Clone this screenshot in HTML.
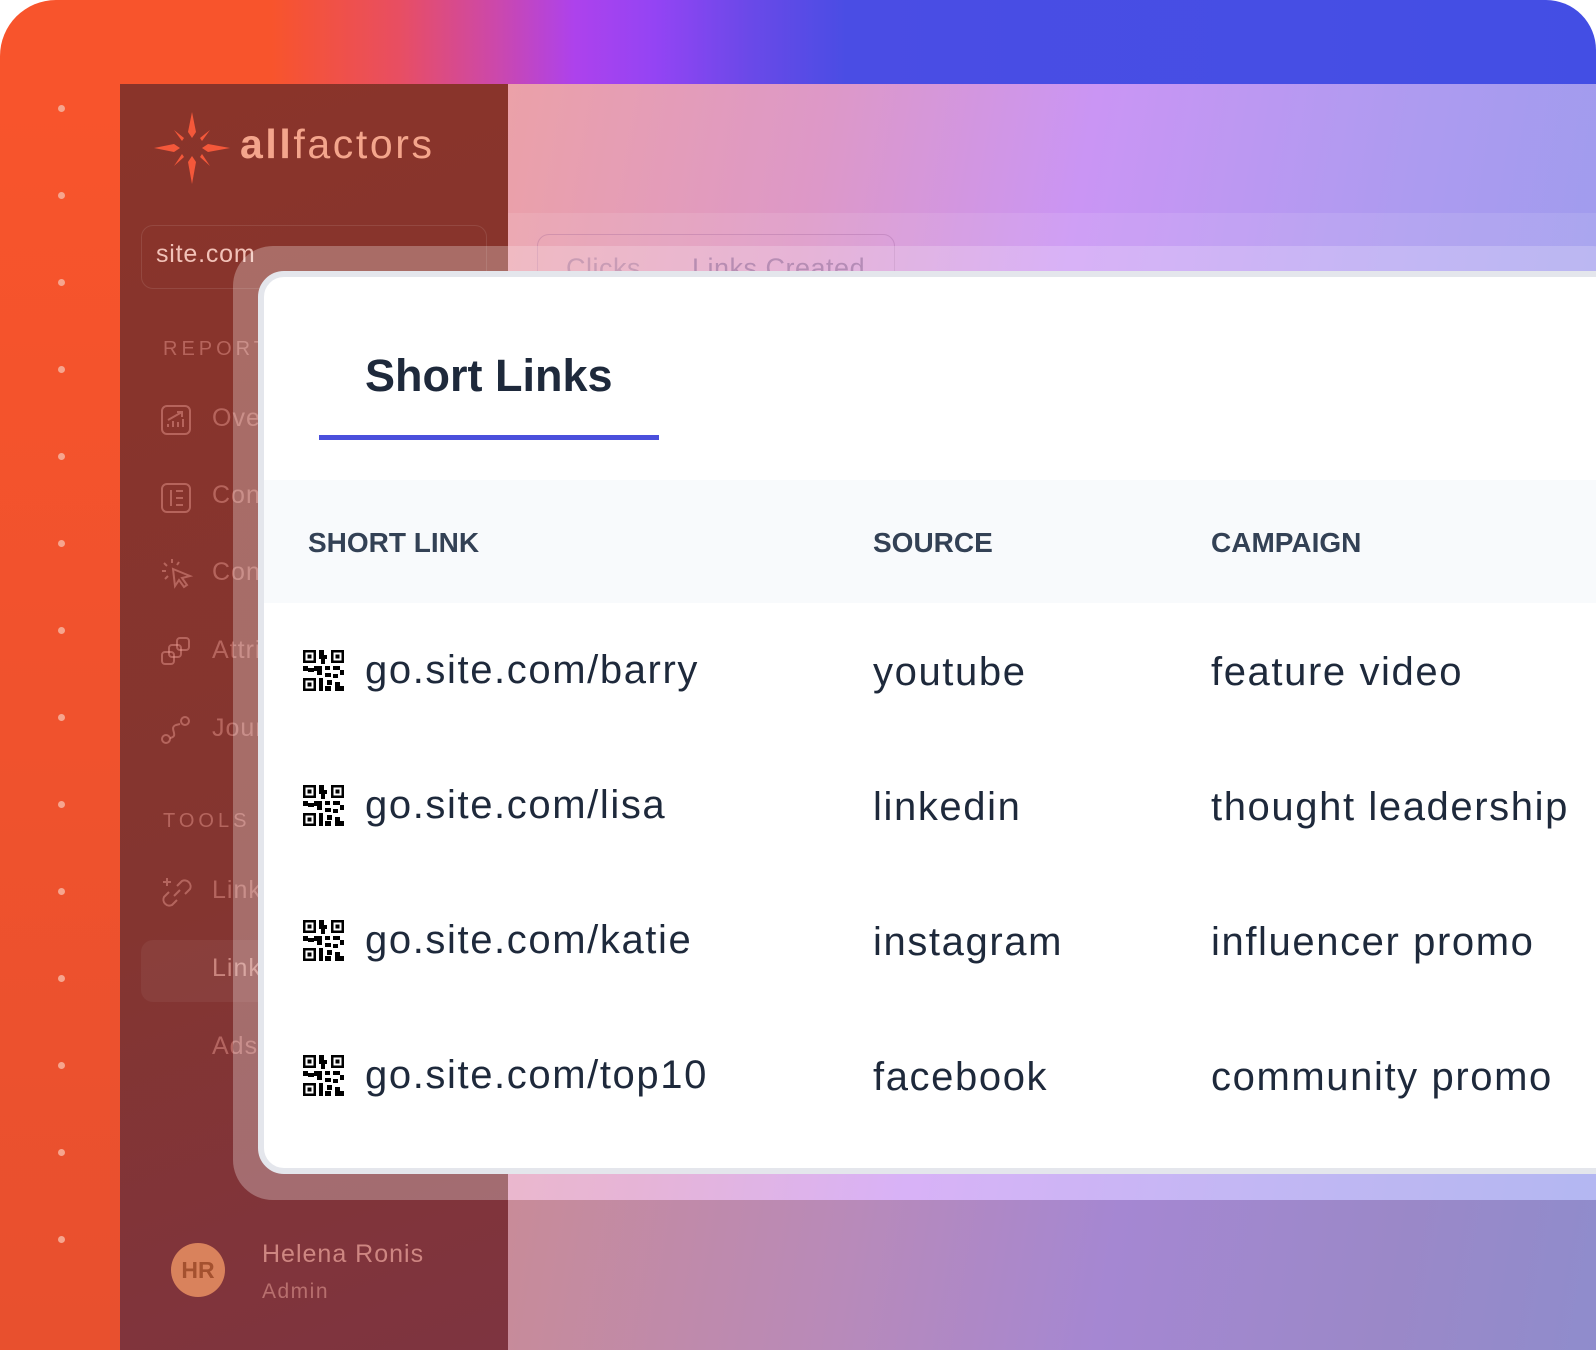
<!DOCTYPE html>
<html><head><meta charset="utf-8"><style>
*{margin:0;padding:0;box-sizing:border-box}
html,body{width:1596px;height:1350px;overflow:hidden;background:#fff}
body{font-family:"Liberation Sans",sans-serif;position:relative}
.bg{position:absolute;left:0;top:0;width:1596px;height:1350px;border-radius:56px 50px 50px 56px;overflow:hidden;
background:linear-gradient(90deg,#f8542c 0%,#f8542c 17%,#e84e62 25%,#cc48aa 31%,#ad42ec 36%,#9444f4 41%,#6a49e8 47%,#4a4de4 53%,#434ee4 100%)}
.leftstrip{position:absolute;left:0;top:84px;width:120px;height:1266px;background:linear-gradient(180deg,#f8542c,#e8502e)}
.dot{position:absolute;left:58px;width:7px;height:7px;border-radius:50%;background:#f6a58e}
.side{position:absolute;left:120px;top:84px;width:388px;height:1266px;background:linear-gradient(160deg,#8a342a 0%,#843530 60%,#7e3440 100%)}
.main{position:absolute;left:508px;top:84px;width:1088px;height:1266px;
background:linear-gradient(100deg,#eba1a8 0%,#dd98c8 25%,#ca95f4 45%,#ad9bf0 70%,#959cec 100%)}
.mainbot{position:absolute;left:508px;top:1200px;width:1088px;height:150px;background:linear-gradient(100deg,#c88b98 0%,#b98ab8 30%,#a587d2 55%,#9b88c8 80%,#8f8ccc 100%)}
.band{position:absolute;left:508px;top:213px;width:1088px;height:33px;background:rgba(255,255,255,0.1)}
.tabs{position:absolute;left:537px;top:234px;width:358px;height:60px;border:1px solid rgba(140,80,140,0.25);border-radius:12px}
.tab{position:absolute;top:18px;font-size:27px;color:rgba(120,70,120,0.45);letter-spacing:0.5px}
.frame{position:absolute;left:233px;top:246px;width:1400px;height:954px;border-radius:40px;background:rgba(255,255,255,0.28)}
.card{position:absolute;left:258px;top:271px;width:1400px;height:903px;border-radius:26px;background:#fff;border:6px solid #e4e6ec}
.logo{position:absolute;left:240px;top:121px;font-size:41px;color:#f4a58c;letter-spacing:2.6px}
.sel{position:absolute;left:141px;top:225px;width:346px;height:64px;border:1px solid rgba(255,255,255,0.1);border-radius:12px}
.stxt{position:absolute;left:156px;top:240px;font-size:25px;color:#f2c2b8;letter-spacing:0.8px}
.lab{position:absolute;left:163px;font-size:20px;letter-spacing:4px;color:rgba(240,160,150,0.45)}
.mi{position:absolute;left:212px;font-size:25px;color:rgba(240,160,150,0.45);letter-spacing:1px}
.ic{position:absolute;left:160px}
.active{position:absolute;left:141px;top:940px;width:346px;height:62px;background:rgba(255,255,255,0.05);border-radius:12px}
.av{position:absolute;left:171px;top:1243px;width:54px;height:54px;border-radius:50%;background:#d9825c;color:#a4512f;font-size:23px;font-weight:bold;text-align:center;line-height:54px}
.nm{position:absolute;left:262px;top:1240px;font-size:25px;color:rgba(240,170,160,0.7);letter-spacing:1px}
.ad{position:absolute;left:262px;top:1280px;font-size:21px;color:rgba(240,170,160,0.5);letter-spacing:1.5px}
.title{position:absolute;left:365px;top:350px;font-size:45px;font-weight:bold;color:#1e293b}
.ul{position:absolute;left:319px;top:435px;width:340px;height:5px;background:#4a4fdc}
.hdr{position:absolute;left:264px;top:480px;width:1340px;height:123px;background:#f8fafc}
.hd{position:absolute;top:527px;font-size:28px;font-weight:bold;color:#334155}
.cell{position:absolute;font-size:40px;color:#1e293b;letter-spacing:1.6px}
.qr{position:absolute;left:303px;width:41px;height:41px}
</style></head><body>
<div class="bg"></div>
<div class="leftstrip"></div>
<div class="dot" style="top:105px"></div><div class="dot" style="top:192px"></div><div class="dot" style="top:279px"></div><div class="dot" style="top:366px"></div><div class="dot" style="top:453px"></div><div class="dot" style="top:540px"></div><div class="dot" style="top:627px"></div><div class="dot" style="top:714px"></div><div class="dot" style="top:801px"></div><div class="dot" style="top:888px"></div><div class="dot" style="top:975px"></div><div class="dot" style="top:1062px"></div><div class="dot" style="top:1149px"></div><div class="dot" style="top:1236px"></div>
<div class="side"></div>
<div class="main"></div>
<div class="mainbot"></div>
<div class="band"></div>
<div class="tabs"><span class="tab" style="left:28px">Clicks</span><span class="tab" style="left:154px;color:rgba(110,60,120,0.6)">Links Created</span></div>

<svg style="position:absolute;left:152px;top:110px" width="80" height="76" viewBox="0 0 80 76">
<g fill="#f4583a">
<path d="M40 2 L44 22 L40 28 L36 22Z"/><path d="M40 74 L44 52 L40 46 L36 52Z"/>
<path d="M2 38 L22 34 L28 38 L22 42Z"/><path d="M78 38 L56 34 L50 38 L56 42Z"/>
<path d="M22 20 L32 28 L30 31 Z"/><path d="M58 20 L48 28 L50 31 Z"/>
<path d="M22 56 L32 47 L30 44 Z"/><path d="M58 56 L48 47 L50 44 Z"/>
</g></svg>
<div class="logo"><b>all</b>factors</div>
<div class="sel"></div><div class="stxt">site.com</div>
<div class="lab" style="top:338px">REPORTS</div>
<svg class="ic" style="top:404px" width="32" height="32" viewBox="0 0 32 32" fill="none" stroke="rgba(240,160,150,0.45)" stroke-width="2"><rect x="2" y="2" width="28" height="28" rx="5"/><path d="M8 23v-3M13 23v-6M18 23v-5M23 23v-8M8 16 L22 8M17 8h5v5"/></svg>
<div class="mi" style="top:404px">Overview</div>
<svg class="ic" style="top:482px" width="32" height="32" viewBox="0 0 32 32" fill="none" stroke="rgba(240,160,150,0.45)" stroke-width="2"><rect x="2" y="2" width="28" height="28" rx="5"/><path d="M11 8v16M16 9h7M16 16h7M16 23h7"/></svg>
<div class="mi" style="top:481px">Content</div>
<svg class="ic" style="top:557px" width="34" height="34" viewBox="0 0 34 34" fill="none" stroke="rgba(240,160,150,0.45)" stroke-width="2"><path d="M13 12 L30 19 L22 21 L27 28 L24 30 L19 23 L15 29Z"/><path d="M12 2v4M4 6l3 3M2 14h4M5 22l3-3M19 5l-2 3"/></svg>
<div class="mi" style="top:558px">Conversions</div>
<svg class="ic" style="top:636px" width="32" height="32" viewBox="0 0 32 32" fill="none" stroke="rgba(240,160,150,0.45)" stroke-width="2"><rect x="2" y="16" width="12" height="12" rx="3"/><rect x="9" y="9" width="12" height="12" rx="3"/><rect x="17" y="2" width="12" height="12" rx="3"/></svg>
<div class="mi" style="top:636px">Attribution</div>
<svg class="ic" style="top:714px" width="32" height="32" viewBox="0 0 32 32" fill="none" stroke="rgba(240,160,150,0.45)" stroke-width="2"><circle cx="6" cy="25" r="4"/><circle cx="25" cy="7" r="4"/><path d="M10 24 C20 22 8 14 16 11 L20 10"/></svg>
<div class="mi" style="top:714px">Journeys</div>
<div class="lab" style="top:810px">TOOLS</div>
<svg class="ic" style="top:876px" width="34" height="34" viewBox="0 0 34 34" fill="none" stroke="rgba(240,160,150,0.45)" stroke-width="2"><path d="M7 2v8M3 6h8"/><path d="M14 20 L20 14"/><path d="M17 10 L22 5 a6 6 0 0 1 8 8 L25 18"/><path d="M17 24 L12 29 a6 6 0 0 1 -8 -8 L9 16"/></svg>
<div class="mi" style="top:876px">Links</div>
<div class="active"></div>
<div class="mi" style="top:954px;color:rgba(245,180,170,0.6)">Links</div>
<div class="mi" style="top:1032px">Ads</div>
<div class="av">HR</div>
<div class="nm">Helena Ronis</div>
<div class="ad">Admin</div>

<div class="frame"></div>
<div class="card"></div>
<div class="title">Short Links</div>
<div class="ul"></div>
<div class="hdr"></div>
<div class="hd" style="left:308px">SHORT LINK</div>
<div class="hd" style="left:873px">SOURCE</div>
<div class="hd" style="left:1211px">CAMPAIGN</div>

<svg width="0" height="0" style="position:absolute"><defs><g id="q">
<path fill="#000" d="M0 0h13v13H0Z M28 0h13v13H28Z M0 28h13v13H0Z" />
<path fill="#fff" d="M2.5 2.5h8v8h-8Z M30.5 2.5h8v8h-8Z M2.5 30.5h8v8h-8Z"/>
<path fill="#000" d="M4.5 4.5h4v4h-4Z M32.5 4.5h4v4h-4Z M4.5 32.5h4v4h-4Z M16 0h5v5h-5Z M16 5h8v4h-8Z M18 9h4v5h-4Z M0 16h5v5H0Z M5 18h6v4H5Z M11 16h8v5h-8Z M22 16h5v4h-5Z M30 16h7v4h-7Z M37 20h4v5h-4Z M14 21h5v4h-5Z M22 23h6v4h-6Z M30 24h5v4h-5Z M16 28h4v13h-4Z M24 30h5v5h-5Z M22 36h6v5h-6Z M32 32h5v9h-5Z M37 36h4v5h-4Z"/>
</g></defs></svg>
<svg class="qr" style="top:650px" viewBox="0 0 41 41"><use href="#q"/></svg>
<svg class="qr" style="top:785px" viewBox="0 0 41 41"><use href="#q"/></svg>
<svg class="qr" style="top:920px" viewBox="0 0 41 41"><use href="#q"/></svg>
<svg class="qr" style="top:1055px" viewBox="0 0 41 41"><use href="#q"/></svg>

<div class="cell" style="left:365px;top:648px">go.site.com/barry</div>
<div class="cell" style="left:873px;top:650px">youtube</div>
<div class="cell" style="left:1211px;top:650px">feature video</div>
<div class="cell" style="left:365px;top:783px">go.site.com/lisa</div>
<div class="cell" style="left:873px;top:785px">linkedin</div>
<div class="cell" style="left:1211px;top:785px">thought leadership</div>
<div class="cell" style="left:365px;top:918px">go.site.com/katie</div>
<div class="cell" style="left:873px;top:920px">instagram</div>
<div class="cell" style="left:1211px;top:920px">influencer promo</div>
<div class="cell" style="left:365px;top:1053px">go.site.com/top10</div>
<div class="cell" style="left:873px;top:1055px">facebook</div>
<div class="cell" style="left:1211px;top:1055px">community promo</div>
</body></html>
